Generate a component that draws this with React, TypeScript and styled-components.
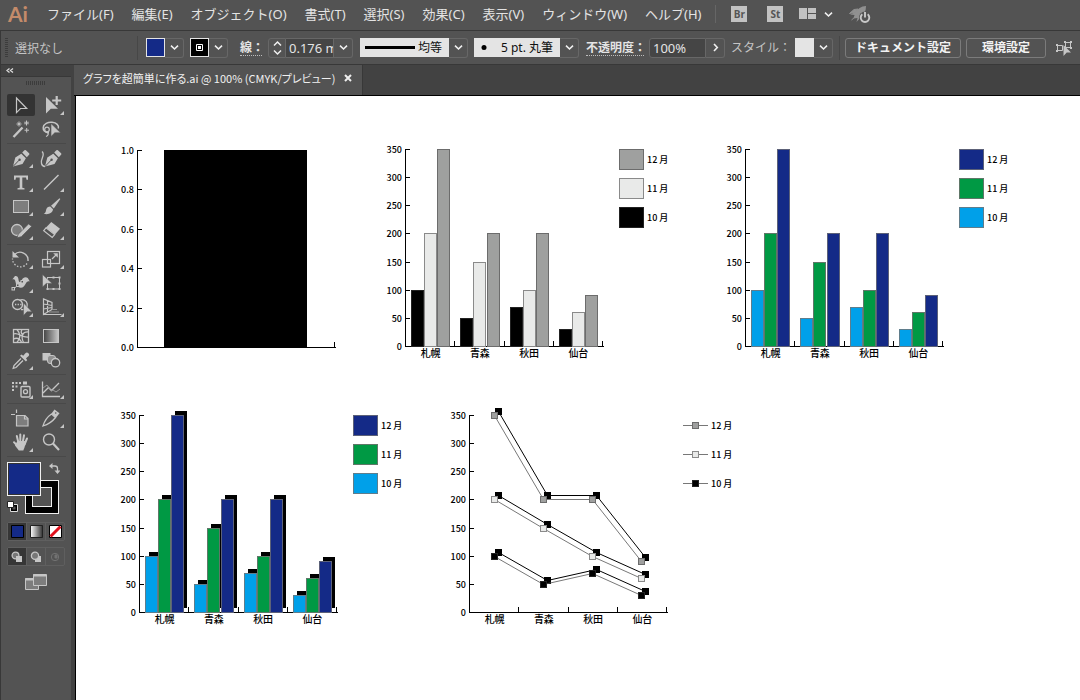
import React from 'react';
import styled, { createGlobalStyle, css } from 'styled-components';

const c = {
  bar: '#535353',
  strip: '#424242',
  edge: '#383838',
  field: '#454545',
  rim: '#676767',
  icon: '#c6c6c6',
  mid: '#7d7d7d',
  text: '#e4e4e4',
  light: '#e4e4e4',
  navy: '#142a87',
};

const uiFont = '"Noto Sans", "Noto Sans CJK JP", sans-serif';
const cjkFont = '"Noto Sans CJK JP", "Noto Sans", sans-serif';

const GlobalStyle = createGlobalStyle`
  * { box-sizing: border-box; }
  body { margin: 0; background: ${c.bar}; font-family: ${uiFont}; font-size: 12px; color: ${c.text}; }
  button, input, select { font: inherit; color: inherit; margin: 0; padding: 0; border: 0; background: none; border-radius: 0; }
  svg { display: block; flex: none; }
`;

const Shell = styled.div`
  display: flex;
  flex-direction: column;
  min-height: 100vh;
  overflow: hidden;
`;

/* ---------- menu bar ---------- */

const MenuBar = styled.header`
  display: flex;
  align-items: center;
  height: 31px;
  padding: 0 8px 2px;
  border-bottom: 1px solid ${c.edge};
  white-space: nowrap;
`;

const Logo = styled.span`
  width: 22px;
  margin-right: 17px;
  font: bold 21px/26px Lato, "Liberation Sans", sans-serif;
  color: #c48b6a;
`;

const MenuList = styled.nav`
  display: flex;
  gap: 18px;
`;

const MenuButton = styled.button`
  font-size: 13px;
  line-height: 20px;
  white-space: nowrap;
`;

const AppActions = styled.div`
  display: flex;
  align-items: center;
  gap: 16px;
  margin-left: 14px;
  padding-left: 15px;
  height: 18px;
  border-left: 1px solid #666;
`;

const AppBadge = styled.button`
  width: 16px;
  height: 16px;
  background: #c2c2c2;
  color: #555;
  font: bold 10px/16px "Open Sans", sans-serif;
  & + & { margin-left: 4px; }
`;

const IconButton = styled.button`
  display: flex;
  align-items: center;
  gap: 8px;
`;

/* ---------- control bar ---------- */

const ControlBar = styled.div`
  display: flex;
  align-items: center;
  height: 34px;
  padding-left: 4px;
  border-left: 1px solid ${c.edge};
  border-bottom: 1px solid ${c.edge};
  white-space: nowrap;
  overflow: hidden;
  > * { flex: none; }
`;

const Grip = styled.span<{ $across?: boolean }>`
  ${(p) =>
    p.$across
      ? css`width: 20px; height: 4px; background: repeating-linear-gradient(90deg, #3c3c3c 0 1px, transparent 1px 2px);`
      : css`width: 3px; height: 20px; background: repeating-linear-gradient(#3c3c3c 0 1px, transparent 1px 2px);`}
`;

const Status = styled.span`
  width: 122px;
  margin-left: 7px;
  color: #c4c4c4;
`;

const Rule = styled.span`
  width: 1px;
  height: 24px;
  background: #474747;
`;

const Combo = styled.div<{ $gap?: number }>`
  display: flex;
  align-items: center;
  height: 20px;
  margin-left: ${(p) => p.$gap ?? 6}px;
`;

const Chip = styled.span<{ $fill: string }>`
  display: grid;
  place-items: center;
  width: 19px;
  height: 19px;
  border: 1px solid ${c.light};
  background: ${(p) => p.$fill};
`;

const Arrow = styled.button`
  display: grid;
  place-items: center;
  width: 19px;
  height: 20px;
  border: 1px solid ${c.rim};
  border-left: 0;
  border-radius: 0 3px 3px 0;
  background: ${c.bar};
`;

const Stepper = styled.button`
  display: grid;
  place-items: center;
  width: 18px;
  height: 20px;
  border: 1px solid ${c.rim};
  border-radius: 3px 0 0 3px;
`;

const ValueInput = styled.input<{ $w: number; $start?: boolean }>`
  width: ${(p) => p.$w}px;
  height: 20px;
  padding: 0 0 0 3px;
  background: ${c.field};
  border: 1px solid ${c.rim};
  border-left-width: ${(p) => (p.$start ? 1 : 0)}px;
  border-radius: ${(p) => (p.$start ? '3px 0 0 3px' : '0')};
  font-size: 13px;
`;

const LightField = styled.span<{ $w: number }>`
  display: flex;
  align-items: center;
  justify-content: space-between;
  width: ${(p) => p.$w}px;
  height: 19px;
  padding: 0 6px 0 5px;
  background: ${c.light};
  color: #111;
`;

const PlainSelect = styled.select`
  appearance: none;
  line-height: 18px;
  outline: 0;
`;

const Caption = styled.label<{ $w: number; $plain?: boolean }>`
  width: ${(p) => p.$w}px;
  line-height: 15px;
  ${(p) =>
    p.$plain
      ? css`color: #c4c4c4;`
      : css`font-weight: 600; border-bottom: 1px dotted #bdbdbd;`}
`;

const PushButton = styled.button<{ $w: number }>`
  width: ${(p) => p.$w}px;
  height: 20px;
  margin-left: 5px;
  border: 1px solid #7b7b7b;
  border-radius: 3px;
  font-weight: 600;
  line-height: 18px;
  color: #f2f2f2;
`;

/* ---------- work area ---------- */

const Work = styled.div`
  display: flex;
  flex: 1;
  background: ${c.strip};
`;

const ToolPanel = styled.aside`
  width: 71px;
  flex: none;
  background: ${c.bar};
  border-left: 1px solid ${c.edge};
`;

const PanelHead = styled.button`
  display: flex;
  align-items: center;
  width: 100%;
  height: 12px;
  padding-left: 5px;
  background: ${c.strip};
  border-bottom: 1px solid ${c.edge};
`;

const GripRow = styled.div`
  display: flex;
  justify-content: center;
  align-items: center;
  height: 14px;
  padding-bottom: 2px;
`;

const ToolGroup = styled.div`
  display: grid;
  grid-template-columns: 28px 28px;
  grid-auto-rows: 22px;
  gap: 2px 3px;
  margin: 0 5px 0 6px;
  padding: 3px 0;
  border-bottom: 1px solid #494949;
`;

const ToolButton = styled.button<{ $active?: boolean }>`
  border-radius: 2px;
  background: ${(p) => (p.$active ? '#333' : 'transparent')};
`;

const PaintWell = styled.div`
  display: grid;
  grid-template-columns: 18px 16px 18px;
  grid-template-rows: 18px 16px 18px;
  margin: 5px 6px 8px;
`;

const FillSwatch = styled.button`
  grid-area: 1 / 1 / 3 / 3;
  z-index: 1;
  border: 1px solid #f0f0f0;
  outline: 1px solid #333;
  outline-offset: -2px;
  background: ${c.navy};
`;

const StrokeSwatch = styled.button`
  grid-area: 2 / 2 / 4 / 4;
  display: grid;
  place-items: center;
  border: 1px solid #f0f0f0;
  background: #000;
  &::after {
    content: '';
    width: 18px;
    height: 18px;
    border: 1px solid #f0f0f0;
    background: ${c.bar};
  }
`;

const SwapButton = styled.button`
  grid-area: 1 / 3;
  display: grid;
  place-items: center;
  padding: 0 0 6px 8px;
`;

const DefaultButton = styled.button`
  grid-area: 3 / 1;
  display: grid;
  place-items: center start;
  padding-top: 2px;
`;

const ModeRow = styled.div`
  display: flex;
  width: 58px;
  height: 19px;
  margin: 0 6px 6px;
  border: 1px solid #5f5f5f;
  border-radius: 2px;
`;

const ModeButton = styled.button<{ $active?: boolean }>`
  display: grid;
  place-items: center;
  flex: 1;
  border-right: 1px solid #5f5f5f;
  background: ${(p) => (p.$active ? '#363636' : 'transparent')};
  &:last-child { border-right: 0; }
`;

const ScreenButton = styled.button`
  display: block;
  margin: 8px 0 0 24px;
`;

const Document = styled.main`
  display: flex;
  flex-direction: column;
  flex: 1;
  min-width: 0;
  margin-left: 3px;
`;

const TabStrip = styled.div`
  display: flex;
  height: 31px;
  border-bottom: 1px solid #000;
`;

const Tab = styled.div`
  display: flex;
  align-items: center;
  justify-content: space-between;
  width: 289px;
  padding: 0 10px 4px 9px;
  background: ${c.bar};
  border-right: 1px solid ${c.edge};
  font-family: ${cjkFont};
  font-size: 11px;
  font-feature-settings: "palt";
  color: #f0f0f0;
  white-space: nowrap;
`;

const Canvas = styled.section`
  position: relative;
  flex: 1;
  border-left: 1px solid #000;
  margin-left: 1px;
  background: #fff;
  overflow: hidden;
`;

/* ---------- charts ---------- */

const Placed = styled.figure<{ $x: number; $y: number }>`
  position: absolute;
  left: ${(p) => p.$x}px;
  top: ${(p) => p.$y}px;
  display: flex;
  gap: 10px;
  margin: 0;
  color: #000;
  font-family: ${cjkFont};
  font-weight: 500;
`;

const Legend = styled.ul`
  display: flex;
  flex-direction: column;
  gap: 8px;
  margin: 8px 0 0;
  padding: 0;
  list-style: none;
  li { display: flex; align-items: center; gap: 3px; height: 21px; font-size: 9px; line-height: 21px; white-space: nowrap; }
`;

const Key = styled.span<{ $fill: string; $edge: string }>`
  width: 25px;
  height: 21px;
  background: ${(p) => p.$fill};
  border: 1px solid ${(p) => p.$edge};
`;

type Series = { name: string; values: number[]; fill: string; edge: string };

const months: [string, number[]][] = [
  ['10 月', [100, 50, 70, 30]],
  ['11 月', [200, 150, 100, 60]],
  ['12 月', [350, 200, 200, 90]],
];
const cities = ['札幌', '青森', '秋田', '仙台'];
const paint = (fills: string[], edges: string[]): Series[] =>
  months.map(([name, values], i) => ({ name, values, fill: fills[i], edge: edges[i] }));

const greys = paint(['#000', '#e9eae9', '#9fa09f'], ['#222', '#8a8a8a', '#6c6c6c']);
const colours = paint(['#00a0e9', '#009944', c.navy], ['#5f7d8c', '#5f7768', '#5c6178']);

const LEFT = 24;
const TOP = 8;
const SIZE = 197;

function Axes({ ticks, groups }: { ticks: string[]; groups: string[] }) {
  const count = Math.max(groups.length, 1);
  return (
    <g>
      <g stroke="#000" strokeWidth="1" shapeRendering="crispEdges">
        <path d={`M${LEFT + 0.5} ${TOP + 0.5}v${SIZE}h${SIZE + 1}`} fill="none" />
        {ticks.map((t, i) => (
          <path key={t} d={`M${LEFT} ${Math.round(TOP + SIZE - (SIZE * i) / (ticks.length - 1)) + 0.5}h5`} />
        ))}
        {Array.from({ length: count }, (_, i) => (
          <path key={i} d={`M${Math.round(LEFT + (SIZE * (i + 1)) / count) + 0.5} ${TOP + SIZE - 5}v6`} />
        ))}
      </g>
      {ticks.map((t, i) => (
        <text key={t} x={LEFT - 3} y={TOP + SIZE - (SIZE * i) / (ticks.length - 1) + 4} fontSize="9" textAnchor="end">
          {t}
        </text>
      ))}
      {groups.map((g, i) => (
        <text key={g} x={LEFT + 1 + (SIZE * (i + 0.5)) / count} y={TOP + SIZE + 11} fontSize="10" textAnchor="middle">
          {g}
        </text>
      ))}
    </g>
  );
}

const steps = ['0', '50', '100', '150', '200', '250', '300', '350'];
const yOf = (v: number) => Math.round(TOP + SIZE - (SIZE * v) / 350);
const groupX = (g: number) => LEFT + (SIZE * g) / 4;

function ChartSvg({ label, children }: { label: string; children: React.ReactNode }) {
  return (
    <svg width={LEFT + SIZE + 7} height={TOP + SIZE + 20} role="img" aria-label={label}>
      {children}
    </svg>
  );
}

function BarChart({ x, y, series, shadow }: { x: number; y: number; series: Series[]; shadow?: boolean }) {
  const bars = series.flatMap((s, si) =>
    s.values.map((v, g) => ({ x: Math.round(groupX(g) + 6 + si * 13.2), y: yOf(v), s, key: `${si}-${g}` })),
  );
  return (
    <Placed $x={x} $y={y}>
      <ChartSvg label="月別棒グラフ">
        <Axes ticks={steps} groups={cities} />
        {shadow &&
          bars.map((b) => <rect key={b.key} x={b.x + 4} y={b.y - 4} width="12" height={TOP + SIZE - b.y} />)}
        {bars.map((b) => (
          <rect
            key={b.key}
            x={b.x + 0.5}
            y={b.y + 0.5}
            width="12"
            height={TOP + SIZE - b.y}
            fill={b.s.fill}
            stroke={b.s.edge}
          />
        ))}
      </ChartSvg>
      <Legend>
        {[...series].reverse().map((s) => (
          <li key={s.name}>
            <Key $fill={s.fill} $edge={s.edge} />
            {s.name}
          </li>
        ))}
      </Legend>
    </Placed>
  );
}

function LineChart({ x, y, series }: { x: number; y: number; series: Series[] }) {
  const px = (g: number) => Math.round(groupX(g + 0.5));
  return (
    <Placed $x={x} $y={y}>
      <ChartSvg label="月別折れ線グラフ">
        <Axes ticks={steps} groups={cities} />
        {series.map((s) => {
          const line = s.values.map((v, g) => `${px(g) + 0.5},${yOf(v) + 0.5}`).join(' ');
          return (
            <g key={s.name}>
              <g transform="translate(4 -4)">
                <polyline points={line} fill="none" stroke="#000" />
                {s.values.map((v, g) => (
                  <rect key={g} x={px(g) - 3} y={yOf(v) - 3} width="7" height="7" />
                ))}
              </g>
              <polyline points={line} fill="none" stroke="#555" strokeWidth="0.8" />
              {s.values.map((v, g) => (
                <rect key={g} x={px(g) - 2.5} y={yOf(v) - 2.5} width="6" height="6" fill={s.fill} stroke={s.edge} />
              ))}
            </g>
          );
        })}
      </ChartSvg>
      <Legend>
        {[...series].reverse().map((s) => (
          <li key={s.name}>
            <svg width="25" height="21">
              <path d="M0 10.5h25" stroke="#777" />
              <rect x="9.5" y="7.5" width="6" height="6" fill={s.fill} stroke={s.edge} />
            </svg>
            {s.name}
          </li>
        ))}
      </Legend>
    </Placed>
  );
}

function SingleBar({ x, y }: { x: number; y: number }) {
  return (
    <Placed $x={x} $y={y}>
      <ChartSvg label="初期グラフ">
        <Axes ticks={['0.0', '0.2', '0.4', '0.6', '0.8', '1.0']} groups={[]} />
        <rect x={LEFT + 27} y={TOP} width="143" height={SIZE + 1} />
      </ChartSvg>
    </Placed>
  );
}

/* ---------- icons ---------- */

const Chevron = ({ dir = 'down' }: { dir?: 'down' | 'right' }) => (
  <svg width="9" height="9" viewBox="0 0 9 9" fill="none" stroke="#f0f0f0" strokeWidth="1.6">
    <path d={dir === 'down' ? 'M1 2.7 4.5 6 8 2.7' : 'M3 1l3.3 3.5L3 8'} />
  </svg>
);

const I = c.icon;
const corner = <path d="M26 17v4h-4z" fill={I} />;
const nib = (
  <>
    <path d="M6 19.5 8.3 10.5l6-3.7 4.6 4.4-3.4 5.8z" fill={I} />
    <path d="m15.2 5.6 2.2-2.4q.8-.6 1.5 0l3.2 3q.7.8 0 1.5l-2.3 2.5z" fill={I} />
    <path d="m6.4 19.1 5.8-6" stroke={c.bar} strokeWidth="1" />
    <circle cx="12.6" cy="12.8" r="1.2" fill={c.bar} />
  </>
);

const tools: Record<string, React.ReactNode> = {
  選択: <path d="M9.5 4v14.6l4-4.1h6.2z" fill="none" stroke={I} strokeWidth="1.2" />,
  ダイレクト選択: (
    <>
      <path d="M8 3v16.5l4.8-4.7H20z" fill={I} />
      <path d="M18.7 2.5v8M14.7 6.5h8" stroke={c.bar} strokeWidth="4" />
      <path d="M18.7 2v9M14.200 6.5h9" stroke={I} strokeWidth="2.200" />
      {corner}
    </>
  ),
  自動選択: (
    <g stroke={I} fill="none">
      <path d="m6.5 19 9-9.5" strokeWidth="2.4" />
      <path d="M12 3.500v5M9.500 6h5M19.500 2.500v5M17 5h5M19.700 10v4.500M17.500 12.200H22" strokeWidth="1" />
      <path d="m10.500 4.500 3 3M13.500 4.500l-3 3M18 3.500l3 3M21 3.500l-3 3" strokeWidth=".7" />
    </g>
  ),
  なげなわ: (
    <>
      <path d="M11 14.8C6.500 14.800 5 11.800 5.200 9.500 5.600 5.600 10 4 14 4.300c4.500.4 7.300 3 6.300 6.200" fill="none" stroke={I} strokeWidth="1.5" />
      <circle cx="9" cy="11.500" r="2.300" fill="none" stroke={I} strokeWidth="1.200" />
      <path d="M9 14c2 1.500 1.500 3.500-1 4.500" fill="none" stroke={I} strokeWidth="1.200" />
      <path d="M13 5.500v13l3.800-3.700h5.800z" fill={I} stroke={c.bar} strokeWidth=".6" />
    </>
  ),
  ペン: <>{nib}{corner}</>,
  曲線: (
    <>
      <g transform="translate(1 0)">{nib}</g>
      <path d="M4 4.500C8 8 2 12 3.500 16.500c.4 1.700 1.700 2.800 3.500 3" fill="none" stroke={I} strokeWidth="1.300" />
    </>
  ),
  文字: (
    <>
      <path d="M7 4.500h14v4.300h-1.500L19 6.500h-3.700v10.300l2.200.5v1.200h-7v-1.200l2.200-.5V6.500H9l-.5 2.300H7z" fill={I} />
      {corner}
    </>
  ),
  直線: <><path d="M6 18.500 20.500 4" stroke={I} strokeWidth="1.500" />{corner}</>,
  長方形: <><rect x="6.500" y="5.500" width="15" height="12" fill={c.mid} stroke={I} />{corner}</>,
  ブラシ: (
    <>
      <path d="m21.500 3.200.8.8-6.500 9.500-2.800-2.700z" fill={I} />
      <path d="M12.200 11.500 15 14.300c-.2 3.800-4.500 5.700-9.300 4.500 2.300-.9 1.900-2.300 2.500-4.300.6-1.800 2-3 4-3z" fill={I} />
      {corner}
    </>
  ),
  塗りブラシ: (
    <>
      <circle cx="10" cy="11" r="5.500" fill={c.mid} stroke={I} strokeWidth="1.300" />
      <path d="m10 18.800 1.200-3.500L21.500 5l3.300 2.200-10.500 10.500z" fill={I} stroke={c.bar} strokeWidth=".7" />
      {corner}
    </>
  ),
  消しゴム: (
    <>
      <path d="m13.300 3 8.700 6.700-5 5.800-9-7z" fill={I} />
      <path d="m8 8.800 8.700 6.800-2.500 2.900-8.500-6.800z" fill={c.bar} stroke={I} strokeWidth="1.200" />
      {corner}
    </>
  ),
  回転: (
    <>
      <path d="M7.500 6.500a8 8 0 0 1 13.500 6.500" fill="none" stroke={I} strokeWidth="1.400" />
      <path d="M20 15.500a8 8 0 0 1-14.500-5" fill="none" stroke={I} strokeWidth="1.300" strokeDasharray="1.500 1.700" />
      <path d="M5.500 3v6.500h6.500z" fill={I} />
      {corner}
    </>
  ),
  拡大縮小: (
    <>
      <g fill="none" stroke={I} strokeWidth="1.200">
        <rect x="9.500" y="3.500" width="12" height="12" />
        <rect x="4.500" y="11.500" width="8" height="7.500" />
        <path d="m14 11 4.500-4.500" />
      </g>
      <path d="M19.800 5.200v4.600l-4.600-4.600z" fill={I} />
      {corner}
    </>
  ),
  線幅: (
    <>
      <path d="M8 4c3-.8 3.500 2.500 3.800 5 .5 1.800 2 1 3-1 1.200-2.500 3.700-3.600 6-2l2 3.500c-2-.8-3 .2-4 2-1.300 3-4 5.500-7.500 3.500-2.200-1.300-2.500-4-3-6-.3-1.500-1.500-2-3-1.500z" fill={I} />
      <path d="m6 17 10-7" stroke={I} />
      <g fill={c.bar} stroke={I}><rect x="5" y="15.500" width="2.500" height="2.500" /><rect x="9.500" y="12" width="2.500" height="2.500" /><rect x="14" y="8.500" width="2.500" height="2.500" /></g>
      {corner}
    </>
  ),
  自由変形: (
    <>
      <rect x="9.500" y="5.500" width="12" height="11.500" fill="none" stroke={I} />
      <g fill={I}><path d="M8.500 16h2v2h-2zM14.500 16h2v2h-2zM20.500 16h2v2h-2zM20.500 10.500h2v2h-2zM20.500 4.500h2v2h-2zM14.500 4.500h2v2h-2z" /></g>
      <path d="M4.500 2.500v12.500l3.700-3.500h6z" fill={I} stroke={c.bar} strokeWidth=".5" />
    </>
  ),
  シェイプ形成: (
    <>
      <g fill="none" stroke={I} strokeWidth="1.300">
        <circle cx="10.500" cy="8.500" r="5" />
        <path d="M12.500 4.500a5 5 0 1 1 1.500 9" />
        <path d="M8 8.500h8" strokeDasharray="1.300 1.300" />
      </g>
      <path d="M16.500 7v12.500l3.500-3.700h5z" fill={I} stroke={c.bar} strokeWidth=".5" />
      {corner}
    </>
  ),
  遠近グリッド: (
    <>
      <g fill="none" stroke={I} strokeWidth="1.200">
        <path d="M5.500 3v15.500l8.500-5V6.500zM9.500 4.800V16M5.500 8l8.500 1.500M5.500 13l8.500-1.500M5.500 18.500h18" />
        <path d="M14 13.500h5M11 16h10" stroke="#969696" />
      </g>
      {corner}
    </>
  ),
  メッシュ: (
    <g fill="none" stroke={I} strokeWidth="1.300">
      <rect x="6.500" y="4.500" width="15" height="13" />
      <path d="M10 4.500c3.500 4 3.500 9 0 13M21.500 7c-6-.5-8 4-5 10.500M6.500 9c5-2 8 4 15 3M6.500 14c4-2 6-.5 8 3M15 4.500c-1.500 2.500-1 4 1 5.500" />
    </g>
  ),
  グラデーション: (
    <>
      <defs><linearGradient id="toolGradient"><stop offset="0" stopColor="#444" /><stop offset="1" stopColor="#c8c8c8" /></linearGradient></defs>
      <rect x="5.500" y="4.500" width="15" height="13" fill="url(#toolGradient)" stroke={I} />
    </>
  ),
  スポイト: (
    <>
      <path d="m14 9.500-7 7-.8 2.800 2.800-.8 7-7" fill="none" stroke={I} strokeWidth="1.300" />
      <path d="m13 6.800 1.500-1.300 1.700 1.200 2.200-2.500c1-1 2-1 3 0s1 2 0 3L19 9.300l1.200 1.900-1.300 1.400z" fill={I} />
      {corner}
    </>
  ),
  ブレンド: (
    <>
      <rect x="4.500" y="4" width="8" height="7.500" fill={I} />
      <rect x="9.500" y="6.500" width="8" height="8" rx="2.500" fill="#909090" stroke={I} />
      <circle cx="17.500" cy="13.700" r="4.200" fill={c.bar} stroke={I} strokeWidth="1.300" />
    </>
  ),
  シンボルスプレー: (
    <>
      <path d="M5 4h2v2H5zM8.500 4h2v2h-2zM12 4h2v2h-2zM5 7.500h2v2H5zM8.500 7.500h2v2h-2zM5 11h2v2H5zM16 3.500h4v3h-4z" fill={I} />
      <rect x="14" y="8.500" width="9" height="10.500" rx="1" fill="none" stroke={I} strokeWidth="1.400" />
      <circle cx="18.500" cy="13.700" r="2" fill={c.bar} stroke={I} strokeWidth="1.300" />
      {corner}
    </>
  ),
  グラフ: (
    <>
      <path d="M4.500 3.500v15H22" fill="none" stroke={I} strokeWidth="1.300" />
      <path d="m5 15 5.500-5.500 3 3L21 5" fill="none" stroke={I} strokeWidth="1.300" />
      <path d="m5 10 4-3 4 6 2-1 3 2 4-3" fill="none" stroke="#999" />
      {corner}
    </>
  ),
  アートボード: (
    <g fill="none" stroke={I} strokeWidth="1.200">
      <path d="M9.500 2.500V6M4 7.500h4" />
      <path d="M9.500 8.500H18l3 3v7.500H9.500z" fill={c.mid} />
      <path d="M17.500 8v4H21" />
    </g>
  ),
  スライス: (
    <>
      <path d="M5 19C6.500 14 9 10 13.500 7l4 3.500C14 15 10 17.500 5 19z" fill="none" stroke={I} strokeWidth="1.300" />
      <path d="m13.500 6.500 3-4 5 3.800-3.500 4.400z" fill={I} />
      <circle cx="17.700" cy="6" r=".8" fill={c.bar} />
      {corner}
    </>
  ),
  手のひら: (
    <>
      <g stroke={I} strokeWidth="2" strokeLinecap="round" fill="none">
        <path d="m9.800 5 1.700 7M13.300 3.500V11M17 4.300 15.800 11M20 7.500l-2.500 6M7 11.200l3.500 4" />
      </g>
      <path d="M10.300 10h7.500l1 2-1.500 5-1 2.500h-4.500L8 14.500z" fill={I} />
      {corner}
    </>
  ),
  ズーム: (
    <>
      <circle cx="11" cy="8.500" r="5.500" fill="none" stroke={I} strokeWidth="1.400" />
      <path d="m15 12.500 6 6.500" stroke={I} strokeWidth="2.200" />
    </>
  ),
};

const groups = [
  ['選択', 'ダイレクト選択', '自動選択', 'なげなわ'],
  ['ペン', '曲線', '文字', '直線', '長方形', 'ブラシ', '塗りブラシ', '消しゴム'],
  ['回転', '拡大縮小', '線幅', '自由変形', 'シェイプ形成', '遠近グリッド'],
  ['メッシュ', 'グラデーション', 'スポイト', 'ブレンド'],
  ['シンボルスプレー', 'グラフ'],
  ['アートボード', 'スライス', '手のひら', 'ズーム'],
];

const menus = ['ファイル(F)', '編集(E)', 'オブジェクト(O)', '書式(T)', '選択(S)', '効果(C)', '表示(V)', 'ウィンドウ(W)', 'ヘルプ(H)'];

const DrawModeIcon = ({ kind }: { kind: 'normal' | 'behind' | 'inside' }) => (
  <svg width="12" height="12" viewBox="0 0 12 12">
    {kind === 'inside' ? (
      <g fill="none" stroke="#727272"><circle cx="6" cy="6" r="3.700" /><path d="M6 4h2v3H6z" fill="#727272" /></g>
    ) : kind === 'normal' ? (
      <><circle cx="4.500" cy="4.500" r="3.400" fill="#777" stroke={I} strokeWidth="1.300" /><path d="M5 5h6v6H5z" fill={I} /></>
    ) : (
      <><path d="M5 5h6v6H5z" fill={I} /><circle cx="5" cy="4.800" r="3.600" fill="#777" stroke={I} strokeWidth="1.300" /></>
    )}
  </svg>
);

export default function App() {
  return (
    <Shell>
      <GlobalStyle />
      <MenuBar>
        <Logo>Ai</Logo>
        <MenuList>
          {menus.map((m) => <MenuButton key={m}>{m}</MenuButton>)}
        </MenuList>
        <AppActions>
          <AppBadge>Br</AppBadge>
          <AppBadge>St</AppBadge>
          <IconButton aria-label="ワークスペース">
            <svg width="17" height="12" fill="#c2c2c2"><path d="M0 0h8v11H0zM9 0h8v5H9zM9 6h8v5H9z" /></svg>
            <Chevron />
          </IconButton>
          <IconButton aria-label="GPU パフォーマンス">
            <svg width="22" height="19" viewBox="0 0 22 19">
              <path d="M17 1c-5 .3-8.500 2.800-10.500 6L1 9.500l4.500.5-1 3.500 4-.5-1 4 4.500-5C15.500 9.500 17 6 17 1z" fill="#909090" />
              <path d="M7 7 .500 8.500 5 4.500l4-.5zM6 12l-3.500 3" fill="#909090" stroke="#909090" />
              <circle cx="16" cy="12.500" r="6" fill={c.bar} />
              <path d="M13.300 9.300a4.300 4.300 0 1 0 5.400 0M16 7v5.500" fill="none" stroke="#c8c8c8" strokeWidth="1.900" />
            </svg>
          </IconButton>
        </AppActions>
      </MenuBar>

      <ControlBar>
        <Grip />
        <Status>選択なし</Status>
        <Rule />
        <Combo $gap={8}>
          <Chip $fill={c.navy} />
          <Arrow aria-label="塗り"><Chevron /></Arrow>
        </Combo>
        <Combo>
          <Chip $fill="#000">
            <svg width="7" height="7"><path d="M.5.500h6v6h-6z" fill="none" stroke="#fff" /><path d="M2 2h3v3H2z" fill="#fff" /></svg>
          </Chip>
          <Arrow aria-label="線のカラー"><Chevron /></Arrow>
        </Combo>
        <Combo $gap={12}>
          <Caption $w={22} htmlFor="stroke-width">線：</Caption>
        </Combo>
        <Combo>
          <Stepper aria-label="線幅を増減">
            <svg width="9" height="16" fill="none" stroke="#f0f0f0" strokeWidth="1.500"><path d="M1 5.500 4.500 2 8 5.500M1 10.500 4.500 14 8 10.500" /></svg>
          </Stepper>
          <ValueInput id="stroke-width" $w={48} defaultValue="0.176 mm" />
          <Arrow aria-label="線幅の一覧"><Chevron /></Arrow>
        </Combo>
        <Combo $gap={7}>
          <LightField $w={89}>
            <svg width="50" height="3"><path d="M0 0h50v3H0z" /></svg>
            <PlainSelect aria-label="可変線幅プロファイル"><option>均等</option></PlainSelect>
          </LightField>
          <Arrow aria-label="プロファイルの一覧"><Chevron /></Arrow>
        </Combo>
        <Combo>
          <LightField $w={86}>
            <svg width="9" height="7"><circle cx="5" cy="3.500" r="2.500" /></svg>
            <PlainSelect aria-label="ブラシ定義"><option>5 pt. 丸筆</option></PlainSelect>
          </LightField>
          <Arrow aria-label="ブラシの一覧"><Chevron /></Arrow>
        </Combo>
        <Combo $gap={7}>
          <Caption $w={58} htmlFor="opacity">不透明度：</Caption>
        </Combo>
        <Combo $gap={5}>
          <ValueInput id="opacity" $w={57} $start defaultValue="100%" />
          <Arrow aria-label="不透明度スライダー"><Chevron dir="right" /></Arrow>
        </Combo>
        <Combo>
          <Caption $w={60} $plain htmlFor="graphic-style">スタイル：</Caption>
        </Combo>
        <Combo $gap={4}>
          <Chip $fill={c.light} />
          <Arrow id="graphic-style" aria-label="スタイル"><Chevron /></Arrow>
        </Combo>
        <Combo><Rule /></Combo>
        <PushButton $w={116}>ドキュメント設定</PushButton>
        <PushButton $w={80}>環境設定</PushButton>
        <Combo $gap={10}>
          <IconButton aria-label="類似オブジェクトを選択">
            <svg width="17" height="18" viewBox="0 0 17 18">
              <path d="M9.500 3.500h5v5h-5zM1.500 6.500h5v5h-5z" fill="none" stroke={I} />
              <path d="M8 2h2v2H8zM14 2h2v2h-2zM14 8h2v2h-2zM0 5h2v2H0zM0 11h2v2H0z" fill={I} />
              <path d="M7.500 6v11l3.200-3.500H15z" fill={I} />
            </svg>
            <svg width="7" height="5"><path d="M0 1h6L3 4z" fill="#f0f0f0" /></svg>
          </IconButton>
        </Combo>
      </ControlBar>

      <Work>
        <ToolPanel>
          <PanelHead aria-label="パネルを折りたたむ">
            <svg width="8" height="5" fill="none" stroke="#ddd" strokeWidth="1.300"><path d="M3.500.500l-2.500 2 2.500 2M7 .500l-2.500 2 2.500 2" /></svg>
          </PanelHead>
          <GripRow><Grip $across /></GripRow>
          {groups.map((g, gi) => (
            <ToolGroup key={gi}>
              {g.map((name) => (
                <ToolButton key={name} aria-label={name} $active={name === '選択'}>
                  <svg width="28" height="22" viewBox="0 0 28 22">{tools[name]}</svg>
                </ToolButton>
              ))}
            </ToolGroup>
          ))}
          <PaintWell>
            <FillSwatch aria-label="塗り" />
            <StrokeSwatch aria-label="線" />
            <SwapButton aria-label="塗りと線を入れ替え">
              <svg width="11" height="11" viewBox="0 0 11 11"><path d="M3 3h3q2.500 0 2.500 2.500V8" fill="none" stroke={I} strokeWidth="1.300" /><path d="M0 3l3.500-3v6zM8.500 11l-3-3.500h6z" fill={I} /></svg>
            </SwapButton>
            <DefaultButton aria-label="初期設定の塗りと線">
              <svg width="11" height="11" viewBox="0 0 11 11"><path d="M3.500 3.500h7v7h-7z" fill="#000" stroke="#ddd" /><path d="M5.500 5.500h3v3h-3z" fill={c.bar} /><path d="M.5.500h6v6h-6z" fill="#fff" stroke="#222" /></svg>
            </DefaultButton>
          </PaintWell>
          <ModeRow>
            <ModeButton $active aria-label="カラー"><svg width="13" height="13"><path d="M.5.500h12v12H.5z" fill={c.navy} stroke="#000" /></svg></ModeButton>
            <ModeButton aria-label="グラデーション">
              <svg width="13" height="13">
                <defs><linearGradient id="modeGradient"><stop offset="0" stopColor="#fff" /><stop offset="1" stopColor="#333" /></linearGradient></defs>
                <path d="M.5.500h12v12H.5z" fill="url(#modeGradient)" stroke="#222" />
              </svg>
            </ModeButton>
            <ModeButton aria-label="なし"><svg width="13" height="13"><path d="M.5.500h12v12H.5z" fill="#fff" stroke="#000" /><path d="M1.500 11.500l10-10" stroke="#e0101c" strokeWidth="3" /></svg></ModeButton>
          </ModeRow>
          <ModeRow>
            <ModeButton $active aria-label="標準描画"><DrawModeIcon kind="normal" /></ModeButton>
            <ModeButton aria-label="背面描画"><DrawModeIcon kind="behind" /></ModeButton>
            <ModeButton aria-label="内側描画"><DrawModeIcon kind="inside" /></ModeButton>
          </ModeRow>
          <ScreenButton aria-label="スクリーンモード">
            <svg width="22" height="16" viewBox="0 0 22 16" stroke={I} fill={c.mid}>
              <path d="M.5 4.500h13v11H.5z" /><path d="M0 5.500h13" strokeWidth="2" />
              <path d="M8.500.500h13v11h-13z" /><path d="M8 1.500h13" strokeWidth="2" />
            </svg>
          </ScreenButton>
        </ToolPanel>

        <Document>
          <TabStrip>
            <Tab>
              <span>グラフを超簡単に作る.ai @ 100% (CMYK/プレビュー)</span>
              <IconButton aria-label="閉じる">
                <svg width="8" height="8" stroke="#eee" strokeWidth="2"><path d="M1 1l6 6M7 1L1 7" /></svg>
              </IconButton>
            </Tab>
          </TabStrip>
          <Canvas>
            <SingleBar x={37} y={46} />
            <BarChart x={305} y={45} series={greys} />
            <BarChart x={645} y={45} series={colours} />
            <BarChart x={39} y={311} series={colours} shadow />
            <LineChart x={369} y={311} series={greys} />
          </Canvas>
        </Document>
      </Work>
    </Shell>
  );
}
